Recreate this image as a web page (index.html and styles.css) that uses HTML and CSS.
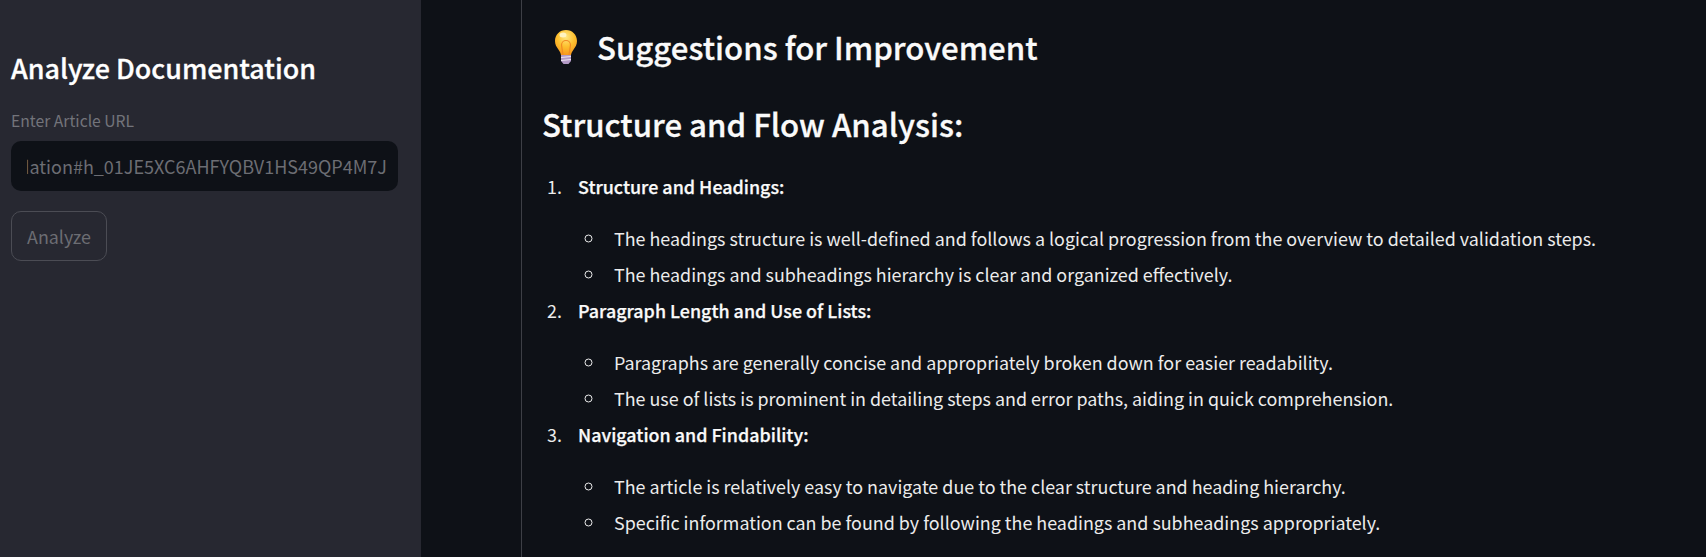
FILE: index.html
```html
<!DOCTYPE html>
<html lang="en">
<head>
<meta charset="utf-8">
<title>Analyze Documentation</title>
<link rel="stylesheet" href="styles.css">
</head>
<body>
<div class="app">
  <aside class="sidebar">
    <h2 class="side-title">Analyze Documentation</h2>
    <label class="field-label">Enter Article URL</label>
    <div class="url-input"><div class="url-clip"><span class="url-text">validation#h_01JE5XC6AHFYQBV1HS49QP4M7J</span></div></div>
    <button class="analyze-btn" disabled>Analyze</button>
  </aside>
  <main class="main">
    <div class="content">
      <h2 class="page-title">
        <svg class="bulb" viewBox="0 0 22 34" aria-hidden="true">
          <defs>
            <radialGradient id="glass" cx="0.5" cy="0.28" r="0.7">
              <stop offset="0" stop-color="#ffe680"/>
              <stop offset="0.55" stop-color="#fdc02f"/>
              <stop offset="1" stop-color="#f79a1e"/>
            </radialGradient>
          </defs>
          <path d="M11 0C4.700 0 0 4.800 0 11c0 3.600 1.600 6 3.400 8.400 1.400 1.900 2.400 3.600 2.600 5.600h10c.2-2 1.200-3.700 2.600-5.600C20.400 17 22 14.600 22 11 22 4.800 17.300 0 11 0z" fill="url(#glass)"/>
          <path d="M8 25l-1.500-10a3.600 3.600 0 1 1 9 0L14 25" fill="none" stroke="#f08a24" stroke-width="1.200"/>
          <ellipse cx="8" cy="5" rx="3.500" ry="2.500" fill="#fff3c0"/>
          <path d="M6 25h10v6l-2.500 3h-5L6 31z" fill="#b39ac6"/>
          <path d="M6 27.500l10-1M6 30.500l10-1" stroke="#ece4f2" stroke-width="1"/>
        </svg>
        <span>Suggestions for Improvement</span>
      </h2>
      <h3 class="section-title">Structure and Flow Analysis:</h3>
      <ol class="steps">
        <li>
          <p class="step-head"><strong>Structure and Headings:</strong></p>
          <ul class="points">
            <li>The headings structure is well-defined and follows a logical progression from the overview to detailed validation steps.</li>
            <li>The headings and subheadings hierarchy is clear and organized effectively.</li>
          </ul>
        </li>
        <li>
          <p class="step-head"><strong>Paragraph Length and Use of Lists:</strong></p>
          <ul class="points">
            <li>Paragraphs are generally concise and appropriately broken down for easier readability.</li>
            <li>The use of lists is prominent in detailing steps and error paths, aiding in quick comprehension.</li>
          </ul>
        </li>
        <li>
          <p class="step-head"><strong>Navigation and Findability:</strong></p>
          <ul class="points">
            <li>The article is relatively easy to navigate due to the clear structure and heading hierarchy.</li>
            <li>Specific information can be found by following the headings and subheadings appropriately.</li>
          </ul>
        </li>
      </ol>
    </div>
  </main>
</div>
</body>
</html>
```
FILE: styles.css
```css
* { box-sizing: border-box; }
html, body { margin: 0; height: 100%; overflow: hidden; }
body {
  background: #0e1117;
  color: #ececec;
  font-family: "Noto Sans CJK JP", "Noto Sans", sans-serif;
  font-size: 17.9px;
  line-height: 36px;
}
.app { display: flex; height: 557px; }
.sidebar {
  width: 421px;
  flex: none;
  background: #272831;
  padding: 47px 23px 0 11px;
  display: flex;
  flex-direction: column;
  align-items: flex-start;
}
.side-title {
  margin: 0 0 19px;
  font-size: 26.9px;
  line-height: 42px;
  font-weight: 500;
  color: #fff;
  -webkit-text-stroke: 0.3px currentColor;
}
.field-label {
  font-size: 15.7px;
  line-height: 26px;
  color: #73747b;
  margin-bottom: 7px;
}
.url-input {
  width: 100%;
  height: 50px;
  background: #0e1117;
  border-radius: 10px;
  padding: 0 11px 0 16px;
  display: flex;
  align-items: center;
}
.url-clip {
  flex: 1;
  min-width: 0;
  display: flex;
  justify-content: flex-end;
  overflow: hidden;
}
.url-text {
  display: block;
  flex: none;
  color: #6c6d73;
  font-size: 18px;
  white-space: nowrap;
}
.analyze-btn {
  margin-top: 20px;
  width: 96px;
  height: 50px;
  background: transparent;
  border: 1px solid #4b4c54;
  border-radius: 10px;
  color: #6c6d73;
  font: inherit;
  padding: 0;
}
.main { flex: 1; min-width: 0; padding-left: 100px; }
.content {
  border-left: 1px solid #3d3f46;
  height: 100%;
  padding: 23px 20px 0 20px;
}
.page-title {
  margin: 0;
  display: flex;
  align-items: center;
  gap: 20px;
  padding-left: 13px;
  font-size: 31.2px;
  line-height: 48px;
  font-weight: 500;
  color: #fafafa;
  -webkit-text-stroke: 0.3px currentColor;
}
.bulb { width: 22px; height: 34px; flex: none; }
.section-title {
  margin: 29px 0 0;
  font-size: 31.2px;
  line-height: 48px;
  font-weight: 500;
  color: #fafafa;
  -webkit-text-stroke: 0.3px currentColor;
}
.steps {
  margin: 20px 0 0;
  padding: 0 0 0 24px;
}
.steps > li { padding-left: 12px; }
.step-head { margin: 0 0 16px; }
.step-head strong { font-weight: 500; color: #fafafa; -webkit-text-stroke: 0.25px currentColor; }
.points { margin: 0; padding-left: 36px; list-style: circle; }
.points li { height: 36px; padding-left: 8px; margin-left: -8px; }
```
